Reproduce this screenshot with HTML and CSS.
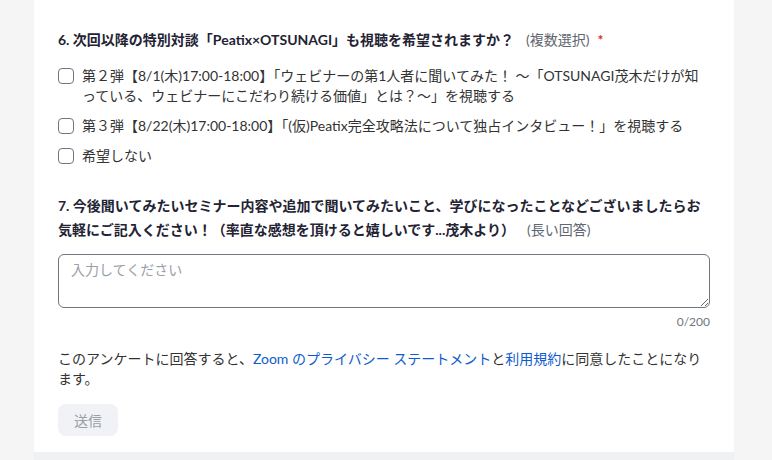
FILE: index.html
```html
<!DOCTYPE html>
<html lang="ja">
<head>
<meta charset="utf-8">
<link rel="stylesheet" href="styles.css">
</head>
<body>
<div class="page">
  <div class="card">
    <div class="question q6">
      <div class="q-title"><span class="q-text">6. 次回以降の特別対談「Peatix×OTSUNAGI」も視聴を希望されますか？</span><span class="q-type">(複数選択)</span><span class="req">*</span></div>
      <div class="options">
        <label class="option"><span class="box"></span><span class="opt-text">第２弾【8/1(木)17:00-18:00】「ウェビナーの第1人者に聞いてみた！ 〜「OTSUNAGI茂木だけが知っている、ウェビナーにこだわり続ける価値」とは？〜」を視聴する</span></label>
        <label class="option"><span class="box"></span><span class="opt-text">第３弾【8/22(木)17:00-18:00】「(仮)Peatix完全攻略法について独占インタビュー！」を視聴する</span></label>
        <label class="option"><span class="box"></span><span class="opt-text">希望しない</span></label>
      </div>
    </div>
    <div class="question q7">
      <div class="q-title tall"><span class="q-text">7. 今後聞いてみたいセミナー内容や追加で聞いてみたいこと、学びになったことなどございましたらお気軽にご記入ください！（率直な感想を頂けると嬉しいです...茂木より）</span><span class="q-type">(長い回答)</span></div>
      <textarea class="answer" placeholder="入力してください"></textarea>
      <div class="counter">0/200</div>
    </div>
    <p class="consent">このアンケートに回答すると、<a class="link" href="#">Zoom のプライバシー ステートメント</a>と<a class="link" href="#">利用規約</a>に同意したことになります。</p>
    <button class="submit" type="button">送信</button>
  </div>
  <div class="footer-strip"></div>
</div>
</body>
</html>
```
FILE: styles.css
```css
* { box-sizing: border-box; }
html, body { margin: 0; padding: 0; }
body {
  background: #f5f5f5;
  font-family: Lato, "Noto Sans CJK JP", sans-serif;
  color: #232333;
  width: 772px;
  height: 460px;
  overflow: hidden;
}
.page {
  width: 700px;
  margin-left: 34px;
}
.card {
  background: #fff;
  padding: 28px 24px 16px;
}
.question { margin: 0; }
.q-title {
  font-size: 14px;
  font-weight: 700;
  line-height: 24px;
  color: #232333;
}
.q-type {
  font-weight: 400;
  font-size: 14px;
  color: #5f6670;
  margin-left: 12px;
}
.req {
  color: #e02828;
  font-weight: 700;
  font-size: 14px;
  margin-left: 8px;
}
.options {
  margin-top: 14px;
  display: flex;
  flex-direction: column;
  gap: 10px;
}
.option {
  display: flex;
  align-items: flex-start;
  gap: 8px;
  font-size: 14px;
  line-height: 20px;
  color: #333;
}
.box {
  flex: none;
  width: 16px;
  height: 16px;
  margin-top: 2px;
  border: 1.5px solid #6e7680;
  border-radius: 4px;
  background: #fff;
}
.opt-text { flex: 1; }
.q7 { margin-top: 28px; }
.answer {
  display: block;
  width: 652px;
  height: 54px;
  margin-top: 12px;
  border: 1px solid #6e7680;
  border-radius: 6px;
  padding: 5px 12px;
  font-family: Lato, "Noto Sans CJK JP", sans-serif;
  font-size: 14px;
  line-height: 20px;
  color: #333;
  resize: vertical;
}
.answer::placeholder { color: #9a9ea6; }
.counter {
  text-align: right;
  font-size: 12px;
  line-height: 16px;
  color: #6e7680;
  margin-top: 6px;
}
.consent {
  margin: 19px 0 0;
  font-size: 14px;
  line-height: 20px;
  color: #333;
}
.link {
  color: #0e5bcf;
  text-decoration: none;
}
.submit {
  display: block;
  margin-top: 15px;
  width: 60px;
  height: 32px;
  border: none;
  border-radius: 8px;
  background: #f0f2f5;
  color: #9a9ea6;
  font-family: Lato, "Noto Sans CJK JP", sans-serif;
  font-size: 14px;
}
.footer-strip {
  height: 20px;
  background: #eff1f3;
}
```
